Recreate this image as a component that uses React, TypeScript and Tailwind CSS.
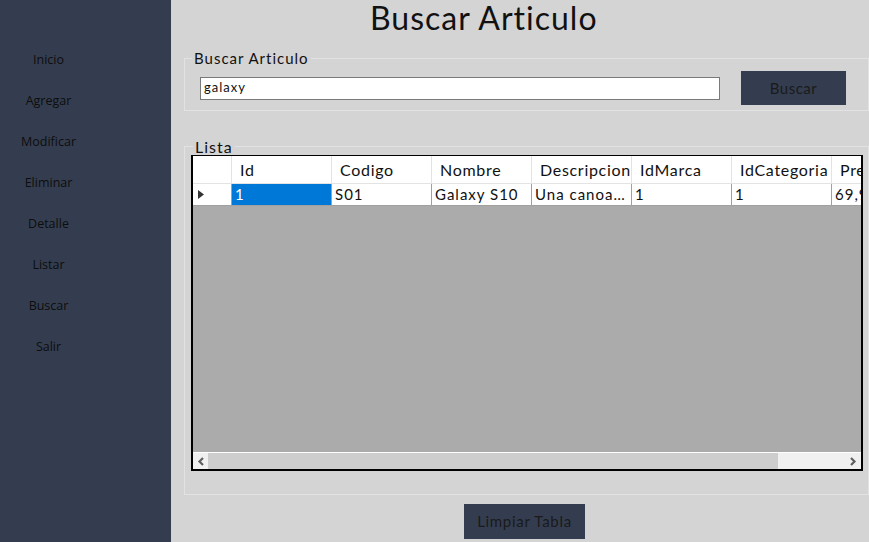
import React from "react";

const menu = ["Inicio", "Agregar", "Modificar", "Eliminar", "Detalle", "Listar", "Buscar", "Salir"];

const columns = ["Id", "Codigo", "Nombre", "Descripcion", "IdMarca", "IdCategoria", "Precio"];
const row = ["1", "S01", "Galaxy S10", "Una canoa de rio", "1", "1", "69,99"];

const gothic = { fontFamily: "Lato, 'DejaVu Sans', sans-serif" };

function Chevron({ dir }: { dir: "left" | "right" }) {
    return (
        <svg width="8" height="9" viewBox="0 0 8 9" className="text-[#606060]">
            <polyline
                points={dir === "left" ? "6,1 2.5,4.5 6,8" : "2,1 5.5,4.5 2,8"}
                fill="none"
                stroke="currentColor"
                strokeWidth={2.2}
            />
        </svg>
    );
}

export default function App() {
    return (
        <div className="flex h-[542px] w-[869px] overflow-hidden bg-[#d4d4d4]" style={gothic}>
            {/* Sidebar */}
            <aside className="w-[171px] shrink-0 bg-[#343d4f] pt-[40px]" style={{ fontFamily: "'Open Sans', sans-serif" }}>
                {menu.map((item) => (
                    <div key={item} className="flex h-[41px] w-[97px] items-center justify-center text-[12.5px] text-[#0d0d0d]">
                        {item}
                    </div>
                ))}
            </aside>

            {/* Main */}
            <main className="flex flex-1 flex-col pl-[13px] pr-[2px]">
                <h1 className="h-[50px] pl-[186px] text-[32px] leading-[36px] tracking-[1px] text-[#111]">Buscar Articulo</h1>

                <fieldset className="h-[61px] border border-[#e2e2e2] p-0">
                    <legend className="ml-[7px] px-[2px] text-[15px] leading-[16px] tracking-[1px] text-[#111]">Buscar Articulo</legend>
                    <div className="flex h-[44px] items-center pl-[15px]">
                        <div className="flex h-[23px] w-[520px] items-center border border-[#7a7a7a] bg-white px-[3px] text-[13px] tracking-[1px] text-[#111]">
                            galaxy
                        </div>
                        <button className="ml-[21px] h-[34px] w-[105px] bg-[#343d4f] text-[15px] tracking-[0.5px] text-[#1a1a1a]">Buscar</button>
                    </div>
                </fieldset>

                <fieldset className="mt-[27px] border border-[#e2e2e2] pb-[23px] pl-[6px] pr-[5px] pt-0">
                    <legend className="ml-[2px] px-[2px] text-[16px] leading-[17px] tracking-[1px] text-[#111]">Lista</legend>
                    <div className="flex h-[316px] w-[672px] flex-col border-2 border-t border-black">
                        {/* Header */}
                        <div className="flex h-[28px] shrink-0 overflow-hidden border-b border-[#e3e3e3] bg-white">
                            <div className="w-[39px] shrink-0 border-r border-[#e3e3e3]" />
                            {columns.map((c) => (
                                <div
                                    key={c}
                                    className="flex w-[100px] shrink-0 items-center overflow-hidden whitespace-nowrap border-r border-[#e3e3e3] pl-[8px] text-[16px] tracking-[0.7px] text-[#111]"
                                >
                                    {c}
                                </div>
                            ))}
                        </div>
                        {/* Row */}
                        <div className="flex h-[22px] shrink-0 overflow-hidden border-b border-[#a0a0a0] bg-white">
                            <div className="flex w-[39px] shrink-0 items-center border-r border-[#a0a0a0] pl-[5px]">
                                <svg width="6" height="9" viewBox="0 0 6 9">
                                    <polygon points="0,0 6,4.5 0,9" fill="#333" />
                                </svg>
                            </div>
                            {row.map((v, i) => (
                                <div
                                    key={i}
                                    className={
                                        i === 0
                                            ? "flex w-[100px] shrink-0 items-center border-r border-[#a0a0a0] bg-[#0078d7] pl-[3px] text-[15px] tracking-[1px] text-white"
                                            : "flex w-[100px] shrink-0 items-center overflow-hidden whitespace-nowrap border-r border-[#a0a0a0] pl-[3px] text-[15px] tracking-[1px] text-[#111]"
                                    }
                                >
                                    <span className={i === 3 ? "block w-[92px] truncate" : ""}>{v}</span>
                                </div>
                            ))}
                        </div>
                        <div className="flex-1 bg-[#ababab]" />
                        {/* Horizontal scrollbar */}
                        <div className="flex h-[17px] shrink-0 border-t border-white bg-[#f0f0f0]">
                            <div className="flex w-[15px] items-center justify-center">
                                <Chevron dir="left" />
                            </div>
                            <div className="w-[570px] bg-[#cdcdcd]" />
                            <div className="flex-1" />
                            <div className="flex w-[17px] items-center justify-center">
                                <Chevron dir="right" />
                            </div>
                        </div>
                    </div>
                </fieldset>

                <div className="mt-[9px] pl-[280px]">
                    <button className="h-[35px] w-[121px] bg-[#343d4f] text-[15px] tracking-[0.7px] text-[#1a1a1a]">Limpiar Tabla</button>
                </div>
            </main>
        </div>
    );
}
